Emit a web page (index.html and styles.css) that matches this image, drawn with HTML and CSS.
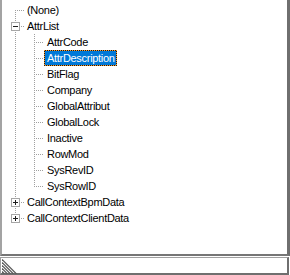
FILE: index.html
```html
<!DOCTYPE html>
<html lang="en">
<head>
    <meta name="viewport" content="width=device-width, initial-scale=1.0" />
    <title>Field Tree</title>
    <link rel="stylesheet" href="styles.css">
</head>
<body>
    <div class="window">
        <div class="tree">
            <div class="node">
                <span class="gutter first"></span>
                <span class="label root">(None)</span>
            </div>
            <div class="node">
                <span class="gutter tee"><span class="toggle"></span></span>
                <span class="label root">AttrList</span>
            </div>
            <div class="node">
                <span class="gutter pipe"></span><span class="gutter tee"></span>
                <span class="label">AttrCode</span>
            </div>
            <div class="node">
                <span class="gutter pipe"></span><span class="gutter tee"></span>
                <span class="label selected">AttrDescription</span>
            </div>
            <div class="node">
                <span class="gutter pipe"></span><span class="gutter tee"></span>
                <span class="label">BitFlag</span>
            </div>
            <div class="node">
                <span class="gutter pipe"></span><span class="gutter tee"></span>
                <span class="label">Company</span>
            </div>
            <div class="node">
                <span class="gutter pipe"></span><span class="gutter tee"></span>
                <span class="label">GlobalAttribut</span>
            </div>
            <div class="node">
                <span class="gutter pipe"></span><span class="gutter tee"></span>
                <span class="label">GlobalLock</span>
            </div>
            <div class="node">
                <span class="gutter pipe"></span><span class="gutter tee"></span>
                <span class="label">Inactive</span>
            </div>
            <div class="node">
                <span class="gutter pipe"></span><span class="gutter tee"></span>
                <span class="label">RowMod</span>
            </div>
            <div class="node">
                <span class="gutter pipe"></span><span class="gutter tee"></span>
                <span class="label">SysRevID</span>
            </div>
            <div class="node">
                <span class="gutter pipe"></span><span class="gutter elbow"></span>
                <span class="label">SysRowID</span>
            </div>
            <div class="node">
                <span class="gutter tee"><span class="toggle closed"></span></span>
                <span class="label root">CallContextBpmData</span>
            </div>
            <div class="node">
                <span class="gutter elbow"><span class="toggle closed"></span></span>
                <span class="label root">CallContextClientData</span>
            </div>
        </div>
        <div class="status">
            <!-- size grip -->
            <svg class="grip" width="15" height="15" viewBox="0 0 15 15">
                <g stroke="#5a5a5a" stroke-width="1.2">
                    <line x1="0" y1="0.5" x2="14.5" y2="15" />
                    <line x1="0" y1="3.5" x2="11.5" y2="15" />
                    <line x1="0" y1="6.5" x2="8.5" y2="15" />
                    <line x1="0" y1="9.5" x2="5.5" y2="15" />
                    <line x1="0" y1="12.5" x2="2.5" y2="15" />
                </g>
            </svg>
        </div>
    </div>
</body>
</html>
```

FILE: styles.css
```css
* {
    padding: 0;
    margin: 0;
    box-sizing: border-box;
}
body {
    background-color: #ffffff;
    font-family: "Liberation Sans", Arial, sans-serif;
    font-size: 11px;
    letter-spacing: -0.3px;
    color: #000000;
}
.window {
    width: 290px;
    height: 275px;
    display: flex;
    flex-direction: column;
}
.tree {
    height: 256px;
    flex: none;
    padding: 2px 0 0 4px;
    border-left: 2px solid #a3a3a3;
    border-right: 3px solid #6f6f6f;
    border-bottom: 2px solid #767676;
}
.node {
    display: flex;
    height: 16px;
}
.gutter {
    position: relative;
    flex: none;
    width: 19px;
    height: 16px;
}
/* dotted tree lines */
.gutter::before,
.gutter::after {
    content: "";
    position: absolute;
}
.gutter::before {
    left: 9px;
    width: 1px;
    background-image: repeating-linear-gradient(to bottom, #a0a0a0 0 1px, transparent 1px 2px);
}
.gutter::after {
    top: 8px;
    left: 9px;
    width: 10px;
    height: 1px;
    background-image: repeating-linear-gradient(to right, #a0a0a0 0 1px, transparent 1px 2px);
}
.pipe::before, .tee::before {
    top: 0;
    bottom: 0;
}
.elbow::before {
    top: 0;
    height: 9px;
}
.first::before {
    top: 8px;
    bottom: 0;
}
.pipe::after {
    display: none;
}
.toggle {
    position: absolute;
    left: 5px;
    top: 4px;
    width: 9px;
    height: 9px;
    z-index: 1;
    border: 1px solid #a6a6a6;
    background-color: #ffffff;
}
.toggle::before,
.toggle::after {
    content: "";
    position: absolute;
    background-color: #1e1e1e;
}
.toggle::before {
    left: 1px;
    top: 3px;
    width: 5px;
    height: 1px;
}
.toggle.closed::after {
    left: 3px;
    top: 1px;
    width: 1px;
    height: 5px;
}
.label {
    height: 16px;
    line-height: 14px;
    padding: 0 1px 0 2px;
    border: 1px solid transparent;
    white-space: nowrap;
}
.label.root {
    margin-left: -1px;
}
.label.selected {
    color: #ffffff;
    border-color: transparent;
    background:
        linear-gradient(#0078d7, #0078d7) padding-box,
        repeating-conic-gradient(#1a1a1a 0 25%, #ff9d2a 0 50%) 0 0 / 2px 2px border-box;
}
.status {
    flex: none;
    height: 18px;
    margin: 1px 1px 0 0;
    border-top: 1px solid #a0a0a0;
    border-left: 1px solid #a0a0a0;
    border-right: 2px solid #6f6f6f;
    border-bottom: 2px solid #6f6f6f;
    padding: 1px 0 0 1px;
}
.grip {
    display: block;
}
```
